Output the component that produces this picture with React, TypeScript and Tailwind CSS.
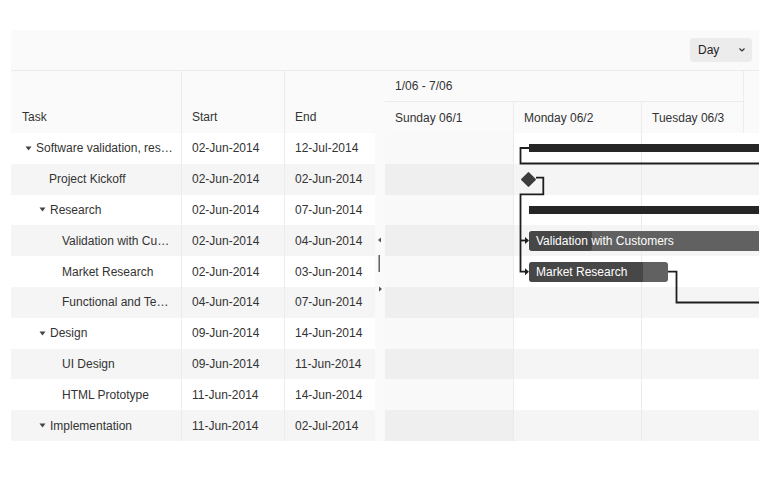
import React from "react";

type Row = { name: string; start: string; end: string; level: number; parent?: boolean };

const ROWS: Row[] = [
  { name: "Software validation, res…", start: "02-Jun-2014", end: "12-Jul-2014", level: 0, parent: true },
  { name: "Project Kickoff", start: "02-Jun-2014", end: "02-Jun-2014", level: 1 },
  { name: "Research", start: "02-Jun-2014", end: "07-Jun-2014", level: 1, parent: true },
  { name: "Validation with Cu…", start: "02-Jun-2014", end: "04-Jun-2014", level: 2 },
  { name: "Market Research", start: "02-Jun-2014", end: "03-Jun-2014", level: 2 },
  { name: "Functional and Te…", start: "04-Jun-2014", end: "07-Jun-2014", level: 2 },
  { name: "Design", start: "09-Jun-2014", end: "14-Jun-2014", level: 1, parent: true },
  { name: "UI Design", start: "09-Jun-2014", end: "11-Jun-2014", level: 2 },
  { name: "HTML Prototype", start: "11-Jun-2014", end: "14-Jun-2014", level: 2 },
  { name: "Implementation", start: "11-Jun-2014", end: "02-Jul-2014", level: 1, parent: true },
];

const PARENT_PAD = ["pl-[14px]", "pl-[28px]", "pl-[41px]"];
const LEAF_PAD = ["pl-[24px]", "pl-[38px]", "pl-[51px]"];

function Caret() {
  return (
    <svg width="7" height="5" viewBox="0 0 7 5" className="mr-[4px] shrink-0">
      <path d="M0.5 0.5 L6.5 0.5 L3.5 4.5 Z" fill="#444" />
    </svg>
  );
}

function Arrow({ x, y }: { x: number; y: number }) {
  return <path d={`M${x - 4} ${y - 3.5} L${x} ${y} L${x - 4} ${y + 3.5} Z`} fill="#1e1e1e" />;
}

function Timeline() {
  return (
    <div className="w-[374px] overflow-hidden">
      {/* header */}
      <div className="flex bg-[#fafafa]">
        <div className="w-[359px] border-r border-[#ececec]">
          <div className="h-[31px] flex items-center pl-[10px] border-b border-[#ececec]">1/06 - 7/06</div>
          <div className="h-[31px] flex">
            <div className="w-[129px] flex items-center pl-[10px] border-r border-[#ececec]">Sunday 06/1</div>
            <div className="w-[128px] flex items-center pl-[10px] border-r border-[#ececec]">Monday 06/2</div>
            <div className="flex-1 flex items-center pl-[10px]">Tuesday 06/3</div>
          </div>
        </div>
        <div className="flex-1" />
      </div>

      {/* body */}
      <div className="relative">
        {ROWS.map((r, i) => (
          <div key={r.name} className="h-[30.8px] flex">
            <div className={`w-[129px] border-r border-[#ebebeb] ${i % 2 ? "bg-[#efefef]" : "bg-[#f9f9f9]"}`} />
            <div className={`w-[128px] border-r border-[#ebebeb] ${i % 2 ? "bg-[#f5f5f5]" : "bg-white"}`} />
            <div className={`flex-1 ${i % 2 ? "bg-[#f5f5f5]" : "bg-white"}`} />
          </div>
        ))}

        {/* summary bars */}
        <div className="absolute left-[144px] top-[11px] w-[240px] h-[8px] bg-[#262626]" />
        <div className="absolute left-[144px] top-[73px] w-[240px] h-[8px] bg-[#262626]" />

        {/* milestone */}
        <div className="absolute left-[138px] top-[40.5px] w-[11px] h-[11px] rotate-45 bg-[#3d3d3d] rounded-[1px]" />

        {/* tasks */}
        <div className="absolute left-[144px] top-[98px] w-[240px] h-[20px] rounded-[3px] bg-[#616161] overflow-hidden">
          <div className="absolute left-0 top-0 h-full w-[63px] bg-[#474747] rounded-[3px]" />
          <div className="relative h-full flex items-center pl-[7px] text-white whitespace-nowrap">Validation with Customers</div>
        </div>
        <div className="absolute left-[144px] top-[129px] w-[139px] h-[20px] rounded-[3px] bg-[#616161] overflow-hidden">
          <div className="absolute left-0 top-0 h-full w-[114px] bg-[#474747] rounded-l-[3px]" />
          <div className="relative h-full flex items-center pl-[7px] text-white whitespace-nowrap">Market Research</div>
        </div>

        {/* dependency lines */}
        <svg className="absolute left-0 top-0 pointer-events-none" width="374" height="308" viewBox="0 0 374 308">
          <g fill="none" stroke="#1e1e1e" strokeWidth="1.8">
            <path d="M144 15 H135.5 V30.5 H374" />
            <path d="M151 44.7 H158.3 V61.3 H135.5 V138.7 H141" />
            <path d="M135.5 107.5 H141" />
            <path d="M283 138.7 H291.5 V169.5 H374" />
          </g>
          <Arrow x={144} y={107.5} />
          <Arrow x={144} y={138.7} />
        </svg>
      </div>
    </div>
  );
}

export default function App() {
  return (
    <div className="w-[770px] h-[501px] bg-white text-[12px] text-[#333] font-['Liberation_Sans',Arial,sans-serif]">
      <div className="pl-[11px] pt-[30px]">
        <div className="w-[748px]">
          {/* toolbar */}
          <div className="h-[41px] bg-[#fafafa] border-b border-[#ececec] flex items-center justify-end pr-[7px]">
            <div className="w-[62px] h-[24px] rounded-[4px] bg-[#ececec] flex items-center justify-between pl-[8px] pr-[6px] text-[#222]">
              <span>Day</span>
              <svg width="8" height="6" viewBox="0 0 8 6">
                <path d="M1.5 1.5 L4 4 L6.5 1.5" fill="none" stroke="#333" strokeWidth="1.2" />
              </svg>
            </div>
          </div>

          <div className="flex">
            {/* left grid */}
            <div className="w-[364px]">
              <div className="h-[62px] flex bg-[#fafafa]">
                <div className="w-[171px] flex items-end pl-[11px] pb-[7px] border-r border-[#ececec]">Task</div>
                <div className="w-[103px] flex items-end pl-[10px] pb-[7px] border-r border-[#ececec]">Start</div>
                <div className="flex-1 flex items-end pl-[10px] pb-[7px]">End</div>
              </div>
              {ROWS.map((r, i) => (
                <div key={r.name} className={`h-[30.8px] flex ${i % 2 ? "bg-[#f5f5f5]" : "bg-white"}`}>
                  <div className={`w-[171px] flex items-center whitespace-nowrap border-r border-[#ececec] ${r.parent ? PARENT_PAD[r.level] : LEAF_PAD[r.level]}`}>
                    {r.parent && <Caret />}
                    {r.name}
                  </div>
                  <div className="w-[103px] flex items-center pl-[10px] border-r border-[#ececec]">{r.start}</div>
                  <div className="flex-1 flex items-center pl-[10px]">{r.end}</div>
                </div>
              ))}
            </div>

            {/* splitter */}
            <div className="w-[10px] bg-[#fafafa] relative">
              <svg className="absolute left-0 top-0" width="10" height="370" viewBox="0 0 10 370">
                <path d="M6 166.5 L3 169 L6 171.5 Z" fill="#555" />
                <rect x="3.5" y="184" width="1.4" height="17" fill="#555" />
                <path d="M4 215.5 L7 218 L4 220.5 Z" fill="#555" />
              </svg>
            </div>

            <Timeline />
          </div>
        </div>
      </div>
    </div>
  );
}
